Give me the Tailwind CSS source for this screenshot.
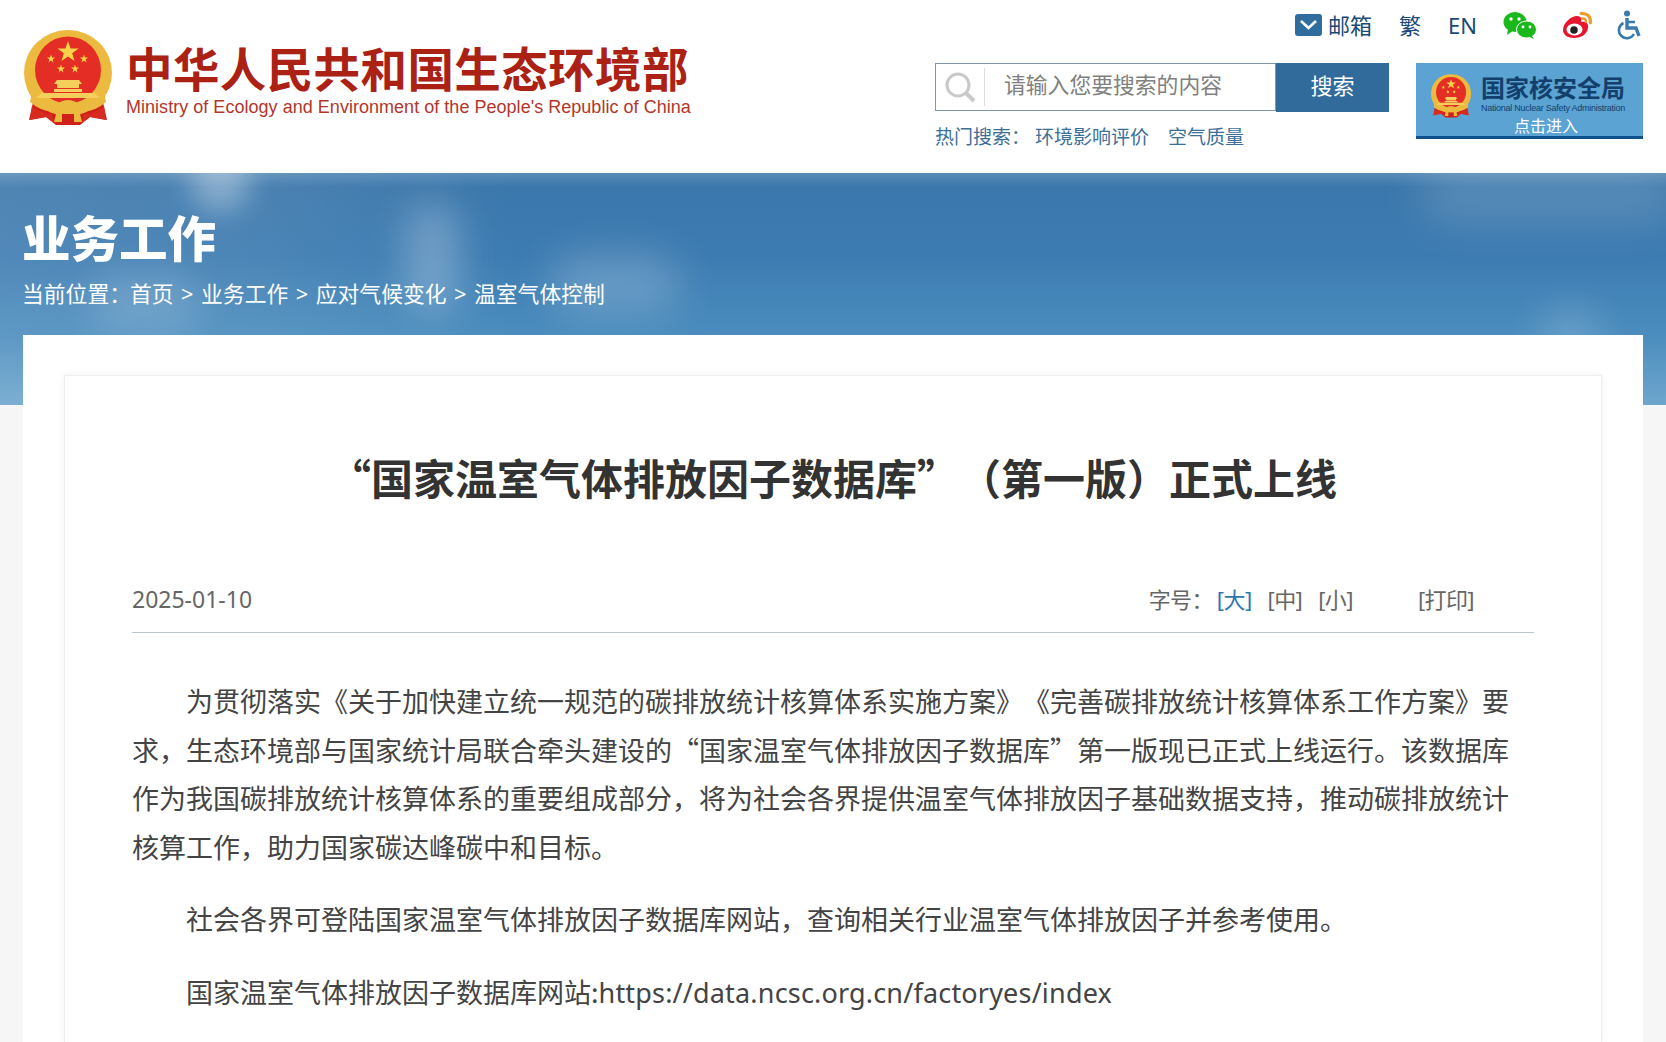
<!DOCTYPE html>
<html lang="zh-CN">
<head>
<meta charset="UTF-8">
<title>“国家温室气体排放因子数据库”（第一版）正式上线</title>
<script src="https://cdn.jsdelivr.net/npm/@tailwindcss/browser@4"></script>
</head>
<body class="h-[1042px] overflow-hidden bg-[#f6f6f6] font-['Noto_Sans','Noto_Sans_CJK_SC',sans-serif] text-[#444] [text-spacing-trim:space-all]">

<!-- emblem, used twice -->
<svg width="0" height="0" class="absolute">
  <symbol id="emblem" viewBox="0 0 90 96">
    <path d="M10 68 L5 90 L22 87 L32 95 H56 L66 87 L83 90 L78 68 Z" fill="#cf2119"/>
    <ellipse cx="44" cy="43" rx="44" ry="43" fill="#ecba3e"/>
    <ellipse cx="44" cy="40" rx="33" ry="33.5" fill="#e32d25"/>
    <polygon points="44,11 46.6,18.5 54.5,18.5 48.2,23.3 50.5,31 44,26.5 37.5,31 39.8,23.3 33.5,18.5 41.4,18.5" fill="#f8d548"/>
    <polygon points="27,24.5 28,27.5 31,27.5 28.6,29.4 29.5,32.4 27,30.6 24.5,32.4 25.4,29.4 23,27.5 26,27.5" fill="#f8d548"/>
    <polygon points="60,24.5 61,27.5 64,27.5 61.6,29.4 62.5,32.4 60,30.6 57.5,32.4 58.4,29.4 56,27.5 59,27.5" fill="#f8d548"/>
    <polygon points="37,34.5 38,37.5 41,37.5 38.6,39.4 39.5,42.4 37,40.6 34.5,42.4 35.4,39.4 33,37.5 36,37.5" fill="#f8d548"/>
    <polygon points="51,34.5 52,37.5 55,37.5 52.6,39.4 53.5,42.4 51,40.6 48.5,42.4 49.4,39.4 47,37.5 50,37.5" fill="#f8d548"/>
    <path d="M33 50 H55 L58 54 H55 V58 H33 V54 H30 Z" fill="#f5cf5b"/>
    <path d="M30 59 H58 V62 H30 Z" fill="#f5cf5b"/>
    <path d="M18 63 H70 L76 68 H12 Z" fill="#f5cf5b"/>
    <path d="M8 62 Q18 76 33 74 Q44 66 55 74 Q70 76 80 62 L82 72 Q68 84 55 80 L44 74 L33 80 Q20 84 6 72 Z" fill="#ecba3e"/>
    <path d="M33 80 Q44 72 55 80 L58 92 H30 Z" fill="#ecba3e"/>
    <path d="M38 84 H50 V92 H38 Z" fill="#cf2119"/>
    <path d="M8 76 Q18 84 28 84 L30 93 L22 87 L6 90 Z M80 76 Q70 84 60 84 L58 93 L66 87 L82 90 Z" fill="#d92a20"/>
  </symbol>
</svg>

<!-- header -->
<header class="h-[173px] bg-white flex justify-between pl-6 pr-[23px]">
  <a class="flex items-start pt-[30px]">
    <svg width="90" height="96"><use href="#emblem"/></svg>
    <div class="ml-[12px]">
      <div class="text-[46.5px] leading-[54px] mt-[10px] font-bold text-[#ab2114] whitespace-nowrap tracking-[0.4px] font-['Noto_Sans_CJK_SC',sans-serif]">中华人民共和国生态环境部</div>
      <div class="text-[18px] leading-[22px] mt-[2px] text-[#b3362a] whitespace-nowrap font-['Liberation_Sans',sans-serif] tracking-[0.03px]">Ministry of Ecology and Environment of the People's Republic of China</div>
    </div>
  </a>

  <div class="flex flex-col items-end">
    <!-- top links -->
    <div class="flex items-center h-[50px] text-[22px] text-[#1a4a75]">
      <svg width="27" height="22" viewBox="0 0 27 22" class="mr-[6px]">
        <rect width="27" height="22" rx="3" fill="#2f6d9e"/>
        <path d="M6 7 L13.5 14 L21 7" fill="none" stroke="#fff" stroke-width="2.6"/>
      </svg>
      <span>邮箱</span>
      <span class="ml-[27px]">繁</span>
      <span class="ml-[27px]">EN</span>
      <svg width="34" height="28" viewBox="0 0 34 28" class="ml-[26px]">
        <ellipse cx="12" cy="11" rx="11.5" ry="10" fill="#1bb81b"/>
        <path d="M5 18 L4 24 L11 19 Z" fill="#1bb81b"/>
        <ellipse cx="23.5" cy="18.5" rx="10" ry="8.5" fill="#1bb81b" stroke="#fff" stroke-width="1"/>
        <path d="M28 24 L31 28 L24 25 Z" fill="#1bb81b"/>
        <circle cx="8" cy="8" r="1.7" fill="#fff"/><circle cx="16" cy="8" r="1.7" fill="#fff"/>
        <circle cx="20" cy="16" r="1.4" fill="#fff"/><circle cx="27" cy="16" r="1.4" fill="#fff"/>
      </svg>
      <svg width="31" height="28" viewBox="0 0 31 28" class="ml-[25px]">
        <path d="M1 19 C1 12 9 5 15 5 C19 5 20 8 19 11 C24 10 27 13 26 17 C25 24 18 27 12 27 C6 27 1 24 1 19 Z" fill="#e6162d"/>
        <ellipse cx="12.5" cy="18.5" rx="8" ry="6" fill="#fff"/>
        <circle cx="12" cy="19" r="3.8" fill="#222"/>
        <path d="M19 2.5 Q29 2 28.5 12" fill="none" stroke="#f09a28" stroke-width="3" stroke-linecap="round"/>
        <path d="M20 7.5 Q24 7 24 11" fill="none" stroke="#f09a28" stroke-width="2.4" stroke-linecap="round"/>
      </svg>
      <svg width="26" height="30" viewBox="0 0 26 30" class="ml-[24px]">
        <circle cx="10" cy="3.5" r="3" fill="#3b7cae"/>
        <path d="M10 8 V18 H19 L22 26" fill="none" stroke="#3b7cae" stroke-width="3.4"/>
        <path d="M11 12 H18" stroke="#3b7cae" stroke-width="2.6"/>
        <path d="M6.5 13 A8 8 0 1 0 17 24" fill="none" stroke="#3b7cae" stroke-width="2.6"/>
      </svg>
    </div>

    <div class="flex mt-[13px]">
      <div>
        <!-- search -->
        <div class="flex h-[49px]">
          <div class="w-[341px] h-[48px] border border-[#8097ab] flex items-start bg-white">
            <svg width="34" height="34" viewBox="0 0 34 34" class="ml-[7px] mt-[6px]">
              <circle cx="15" cy="15" r="11" fill="none" stroke="#c9c9c9" stroke-width="3"/>
              <path d="M23 23 L31 31" stroke="#c9c9c9" stroke-width="4"/>
            </svg>
            <div class="w-px h-[38px] bg-[#dcdcdc] ml-[7px] mt-[4px]"></div>
            <span class="ml-[19px] text-[21.8px] leading-[42px] text-[#808080]">请输入您要搜索的内容</span>
          </div>
          <button class="w-[113px] h-[49px] pb-[4px] bg-[#316b9b] text-white text-[22px]">搜索</button>
        </div>
        <div class="mt-[11px] text-[19px] leading-[28px] text-[#3c6f97] flex">
          <span>热门搜索：</span>
          <a class="ml-[5px]">环境影响评价</a>
          <a class="ml-[19px]">空气质量</a>
        </div>
      </div>
      <!-- nnsa banner -->
      <div class="ml-[27px] w-[227px] h-[76px] bg-[#5ba3d3] border-b-[3px] border-[#10528c] relative flex overflow-hidden">
        <svg width="41" height="46" class="ml-[15px] mt-[10px] shrink-0"><use href="#emblem"/></svg>
        <div class="ml-[9px] text-[#123f6b]">
          <div class="text-[24px] leading-[28px] mt-[11px] font-bold whitespace-nowrap">国家核安全局</div>
          <div class="text-[9px] leading-[10px] mt-[1px] whitespace-nowrap font-['Liberation_Sans',sans-serif] tracking-[-0.25px]">National Nuclear Safety Administration</div>
        </div>
        <div class="absolute left-0 right-0 bottom-[1px] text-center text-[16px] leading-[18px] text-white pl-[33px]">点击进入</div>
      </div>
    </div>
  </div>
</header>

<!-- banner -->
<section class="h-[232px] relative overflow-hidden bg-[linear-gradient(180deg,#3a76aa_0%,#3c7bb1_35%,#4b8dbe_70%,#6ea6cd_100%)]">
  <div class="absolute left-0 top-0 bottom-0 w-[520px] bg-[linear-gradient(90deg,rgba(255,255,255,0.1),rgba(255,255,255,0.08)_50%,rgba(255,255,255,0))]"></div>
  <div class="absolute left-0 right-0 top-0 h-[14px] bg-[linear-gradient(180deg,rgba(255,255,255,0.16),rgba(255,255,255,0))]"></div>
  <div class="absolute left-[190px] top-[-22px] w-[60px] h-[60px] rounded-full bg-white/35 blur-[14px]"></div>
  <div class="absolute left-[405px] top-[30px] w-[55px] h-[110px] rounded-full bg-white/25 blur-[18px]"></div>
  <div class="absolute left-[550px] top-[80px] w-[130px] h-[60px] rounded-full bg-white/20 blur-[20px]"></div>
  <div class="absolute left-[670px] top-[190px] w-[90px] h-[70px] rounded-full bg-white/25 blur-[18px]"></div>
  <div class="absolute left-[90px] top-[100px] w-[110px] h-[60px] rounded-full bg-white/15 blur-[18px]"></div>
  <div class="absolute left-[1420px] top-[-10px] w-[260px] h-[60px] rounded-full bg-white/15 blur-[22px]"></div>
  <div class="absolute left-[1540px] top-[130px] w-[60px] h-[90px] rounded-full bg-white/15 blur-[18px]"></div>
  <div class="relative pl-[22px] pt-[33px] text-white">
    <h1 class="text-[48.5px] leading-[64px] font-black">业务工作</h1>
    <div class="mt-[8px] text-[21.8px] leading-[32px] whitespace-nowrap flex">
      <span>当前位置：</span><span class="ml-[-1px]">首页</span>
      <span class="mx-[7.5px]">&gt;</span><span>业务工作</span>
      <span class="mx-[7.5px]">&gt;</span><span>应对气候变化</span>
      <span class="mx-[7.5px]">&gt;</span><span>温室气体控制</span>
    </div>
  </div>
</section>

<!-- article -->
<main class="relative mx-[23px] mt-[-70px] h-[707px] bg-white px-[41px] pt-[40px]">
  <article class="h-[667px] border border-b-0 border-[#eeeeee] shadow-[0_0_8px_rgba(0,0,0,0.06)] bg-white px-[67px] pt-[73px]">
    <h2 class="text-center text-[42px] leading-[56px] font-bold text-[#333] font-['Noto_Sans_CJK_SC',sans-serif]">“国家温室气体排放因子数据库”（第一版）正式上线</h2>
    <div class="mt-[78px] pb-[17px] border-b border-[#b8c6d2] flex justify-between items-center text-[22px] leading-[32px] text-[#666] pr-[60px]">
      <span class="text-[23px]">2025-01-10</span>
      <div class="flex tracking-[-0.6px]">
        <span>字号：</span>
        <a class="ml-[4px] text-[#2f77ad]">[大]</a>
        <a class="ml-[16px]">[中]</a>
        <a class="ml-[16px]">[小]</a>
        <a class="ml-[65px]">[打印]</a>
      </div>
    </div>
    <div class="mt-[44px] text-[27px] leading-[48.6px] text-[#444] font-['Noto_Sans_CJK_SC',sans-serif]">
      <p class="indent-[54px] mb-[24px]">为贯彻落实《关于加快建立统一规范的碳排放统计核算体系实施方案》《完善碳排放统计核算体系工作方案》要求，生态环境部与国家统计局联合牵头建设的“国家温室气体排放因子数据库”第一版现已正式上线运行。该数据库作为我国碳排放统计核算体系的重要组成部分，将为社会各界提供温室气体排放因子基础数据支持，推动碳排放统计核算工作，助力国家碳达峰碳中和目标。</p>
      <p class="indent-[54px] mb-[24px]">社会各界可登陆国家温室气体排放因子数据库网站，查询相关行业温室气体排放因子并参考使用。</p>
      <p class="indent-[54px]">国家温室气体排放因子数据库网站:<span class="font-['Noto_Sans',sans-serif] tracking-[0.18px]">https://data.ncsc.org.cn/factoryes/index</span></p>
    </div>
  </article>
</main>
</body>
</html>
